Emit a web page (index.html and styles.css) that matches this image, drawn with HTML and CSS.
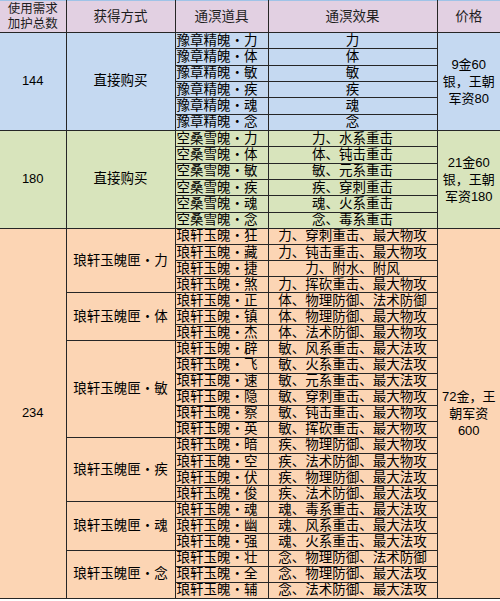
FILE: index.html
```html
<!DOCTYPE html>
<html lang="zh">
<head>
<meta charset="utf-8">
<title>通溟道具</title>
<link rel="stylesheet" href="styles.css">
</head>
<body>
<table class="sheet">
  <colgroup>
    <col class="c1"><col class="c2"><col class="c3"><col class="c4"><col class="c5">
  </colgroup>
  <thead>
    <tr class="head">
      <th class="first small">使用需求<br>加护总数</th>
      <th>获得方式</th>
      <th>通溟道具</th>
      <th>通溟效果</th>
      <th class="last">价格</th>
    </tr>
  </thead>
  <tbody class="blue">
    <tr class="r"><td class="first num" rowspan="6">144</td><td rowspan="6">直接购买</td><td class="item">豫章精魄・力</td><td>力</td><td class="last price" rowspan="6">9金60<br>银，王朝<br>军资80</td></tr>
    <tr class="r"><td class="item">豫章精魄・体</td><td>体</td></tr>
    <tr class="r"><td class="item">豫章精魄・敏</td><td>敏</td></tr>
    <tr class="r"><td class="item">豫章精魄・疾</td><td>疾</td></tr>
    <tr class="r"><td class="item">豫章精魄・魂</td><td>魂</td></tr>
    <tr class="r"><td class="item">豫章精魄・念</td><td>念</td></tr>
  </tbody>
  <tbody class="green">
    <tr class="r"><td class="first num" rowspan="6">180</td><td rowspan="6">直接购买</td><td class="item">空桑雪魄・力</td><td>力、水系重击</td><td class="last price" rowspan="6">21金60<br>银，王朝<br>军资180</td></tr>
    <tr class="r"><td class="item">空桑雪魄・体</td><td>体、钝击重击</td></tr>
    <tr class="r"><td class="item">空桑雪魄・敏</td><td>敏、元系重击</td></tr>
    <tr class="r"><td class="item">空桑雪魄・疾</td><td>疾、穿刺重击</td></tr>
    <tr class="r"><td class="item">空桑雪魄・魂</td><td>魂、火系重击</td></tr>
    <tr class="r"><td class="item">空桑雪魄・念</td><td>念、毒系重击</td></tr>
  </tbody>
  <tbody class="orange">
    <tr class="s"><td class="first num" rowspan="23">234</td><td rowspan="4">琅轩玉魄匣・力</td><td class="item">琅轩玉魄・狂</td><td>力、穿刺重击、最大物攻</td><td class="last price" rowspan="23">72金，王<br>朝军资<br>600</td></tr>
    <tr class="s"><td class="item">琅轩玉魄・藏</td><td>力、钝击重击、最大物攻</td></tr>
    <tr class="s"><td class="item">琅轩玉魄・捷</td><td>力、附水、附风</td></tr>
    <tr class="s"><td class="item">琅轩玉魄・煞</td><td>力、挥砍重击、最大物攻</td></tr>
    <tr class="s"><td rowspan="3">琅轩玉魄匣・体</td><td class="item">琅轩玉魄・正</td><td>体、物理防御、法术防御</td></tr>
    <tr class="s"><td class="item">琅轩玉魄・镇</td><td>体、物理防御、最大物攻</td></tr>
    <tr class="s"><td class="item">琅轩玉魄・杰</td><td>体、法术防御、最大物攻</td></tr>
    <tr class="s"><td rowspan="6">琅轩玉魄匣・敏</td><td class="item">琅轩玉魄・辟</td><td>敏、风系重击、最大法攻</td></tr>
    <tr class="s"><td class="item">琅轩玉魄・飞</td><td>敏、火系重击、最大法攻</td></tr>
    <tr class="s"><td class="item">琅轩玉魄・速</td><td>敏、元系重击、最大法攻</td></tr>
    <tr class="s"><td class="item">琅轩玉魄・隐</td><td>敏、穿刺重击、最大物攻</td></tr>
    <tr class="s"><td class="item">琅轩玉魄・察</td><td>敏、钝击重击、最大物攻</td></tr>
    <tr class="s"><td class="item">琅轩玉魄・英</td><td>敏、挥砍重击、最大物攻</td></tr>
    <tr class="s"><td rowspan="4">琅轩玉魄匣・疾</td><td class="item">琅轩玉魄・暗</td><td>疾、物理防御、最大物攻</td></tr>
    <tr class="s"><td class="item">琅轩玉魄・空</td><td>疾、法术防御、最大物攻</td></tr>
    <tr class="s"><td class="item">琅轩玉魄・伏</td><td>疾、物理防御、最大法攻</td></tr>
    <tr class="s"><td class="item">琅轩玉魄・俊</td><td>疾、法术防御、最大法攻</td></tr>
    <tr class="s"><td rowspan="3">琅轩玉魄匣・魂</td><td class="item">琅轩玉魄・魂</td><td>魂、毒系重击、最大法攻</td></tr>
    <tr class="s"><td class="item">琅轩玉魄・幽</td><td>魂、风系重击、最大法攻</td></tr>
    <tr class="s"><td class="item">琅轩玉魄・强</td><td>魂、火系重击、最大法攻</td></tr>
    <tr class="s"><td rowspan="3">琅轩玉魄匣・念</td><td class="item">琅轩玉魄・壮</td><td>念、物理防御、法术防御</td></tr>
    <tr class="s"><td class="item">琅轩玉魄・全</td><td>念、物理防御、最大法攻</td></tr>
    <tr class="s"><td class="item">琅轩玉魄・辅</td><td>念、法术防御、最大法攻</td></tr>
  </tbody>
</table>
</body>
</html>
```

FILE: styles.css
```css
html, body {
  margin: 0;
  padding: 0;
  background: #ffffff;
}

.sheet {
  border-collapse: collapse;
  table-layout: fixed;
  width: 500px;
  font-family: "Liberation Sans", "Noto Sans CJK SC", sans-serif;
  font-size: 13.5px;
  color: #000000;
}

.c1 { width: 66px; }
.c2 { width: 109px; }
.c3 { width: 93px; }
.c4 { width: 169px; }
.c5 { width: 63px; }

.sheet th,
.sheet td {
  border: 1px solid #262626;
  padding: 0;
  line-height: 12px;
  text-align: center;
  vertical-align: middle;
  white-space: nowrap;
  overflow: hidden;
  font-weight: normal;
}

.sheet .first { border-left: 0; }
.sheet .last { border-right: 0; }

.head th {
  background: #e2d0e2;
  border-top: 1px solid #9fc3e7;
  color: #1e1e1e;
  line-height: 15px;
}

.head { height: 32px; }
.small { font-size: 12.5px; }

.r { height: 16.33px; }
.s { height: 16.09px; }

.blue td { background: #c5d9f1; }
.green td { background: #d8e4bc; }
.orange td { background: #fcd5b4; }

.sheet .item {
  text-align: left;
  padding-left: 1px;
}

.num { font-size: 13px; }

.sheet .price {
  line-height: 17px;
  font-size: 13px;
}
```
